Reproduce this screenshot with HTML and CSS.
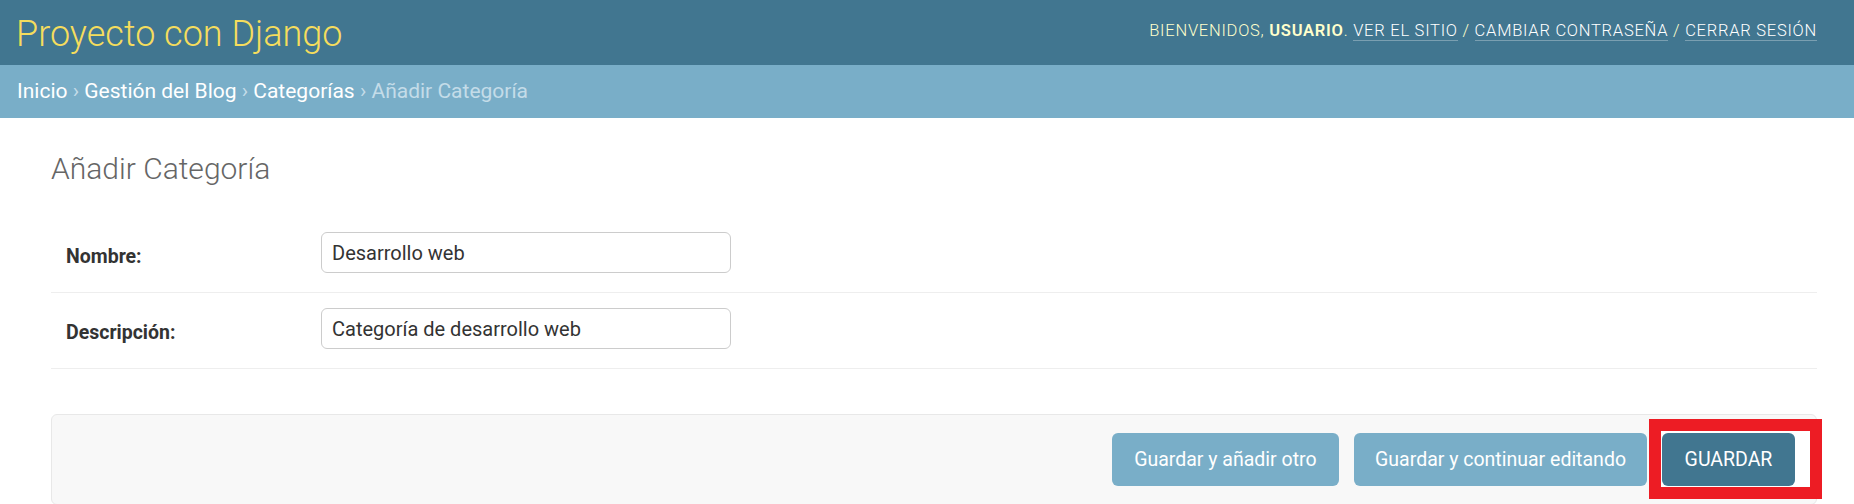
FILE: index.html
```html
<!DOCTYPE html>
<html lang="es">
<head>
<meta charset="utf-8">
<title>Añadir Categoría</title>
<link rel="stylesheet" href="styles.css">
</head>
<body>
<header class="header">
  <div class="branding">Proyecto con Django</div>
  <div class="user-tools">Bienvenidos, <strong>usuario</strong>. <a href="#">Ver el sitio</a> / <a href="#">Cambiar contraseña</a> / <a href="#">Cerrar sesión</a></div>
</header>
<nav class="breadcrumbs"><a href="#">Inicio</a> › <a href="#">Gestión del Blog</a> › <a href="#">Categorías</a> › Añadir Categoría</nav>
<main class="content">
  <h1 class="title">Añadir Categoría</h1>
  <form class="form">
    <div class="form-row">
      <label class="label">Nombre:</label>
      <input class="field" type="text" value="Desarrollo web">
    </div>
    <div class="form-row">
      <label class="label">Descripción:</label>
      <input class="field" type="text" value="Categoría de desarrollo web">
    </div>
    <div class="submit-row">
      <button type="button" class="btn">Guardar y añadir otro</button>
      <button type="button" class="btn btn-wide">Guardar y continuar editando</button>
      <span class="highlight"><button type="button" class="btn btn-default">GUARDAR</button></span>
    </div>
  </form>
</main>
</body>
</html>
```
FILE: styles.css
```css
* { box-sizing: border-box; }
html, body { margin: 0; padding: 0; background: #fff; }
body { font-family: Roboto, "Liberation Sans", sans-serif; color: #333; }

.header {
  height: 65px;
  background: #417690;
  display: flex;
  align-items: center;
  justify-content: space-between;
  padding: 0 37px 0 16px;
}
.branding {
  color: #f5dd5d;
  font-size: 36px;
  font-weight: 300;
  line-height: 40px;
  margin-top: 2px;
}
.user-tools {
  color: #ffffcc;
  font-size: 16.5px;
  font-weight: 300;
  letter-spacing: 0.75px;
  text-transform: uppercase;
  margin-top: -4px;
}
.user-tools strong { font-weight: 600; }
.user-tools a {
  color: #fff;
  text-decoration: none;
  border-bottom: 1px solid rgba(255,255,255,0.3);
}

.breadcrumbs {
  height: 53px;
  background: #79aec8;
  color: #c4dce8;
  font-size: 21px;
  line-height: 53px;
  padding: 0 17px;
}
.breadcrumbs a { color: #fff; text-decoration: none; }

.content { padding: 33px 37px 0 51px; }
.title {
  margin: 0 0 30px;
  font-size: 30px;
  line-height: 36px;
  font-weight: 300;
  color: #666;
}

.form-row {
  display: flex;
  align-items: flex-start;
  padding: 15px 15px 19px;
  border-bottom: 1px solid #eee;
}
.label {
  width: 255px;
  padding: 10px 15px 0 0;
  font-size: 19.5px;
  line-height: 30px;
  font-weight: 700;
  color: #333;
}
.field {
  width: 410px;
  height: 41px;
  border: 1px solid #ccc;
  border-radius: 6px;
  padding: 0 10px;
  font-family: Roboto, "Liberation Sans", sans-serif;
  font-size: 20px;
  color: #333;
  background: #fff;
}

.submit-row {
  margin-top: 45px;
  display: flex;
  justify-content: flex-end;
  gap: 15px;
  padding: 18px 21px;
  background: #f8f8f8;
  border: 1px solid #e8e8e8;
  border-radius: 6px;
}
.btn {
  height: 53px;
  padding: 0 22.5px;
  border: none;
  border-radius: 6px;
  background: #79aec8;
  color: #fff;
  font-family: Roboto, "Liberation Sans", sans-serif;
  font-size: 19.5px;
  font-weight: 400;
}
.btn-wide { padding: 0 21px; }
.btn-default { background: #417690; width: 133px; padding: 0; }
.highlight {
  position: relative;
  z-index: 0;
  display: flex;
}
.highlight::before {
  content: "";
  position: absolute;
  top: -14px;
  left: -13px;
  right: -27px;
  bottom: -13px;
  border: 12px solid #ed1c24;
  background: #fff;
  z-index: -1;
}
```
